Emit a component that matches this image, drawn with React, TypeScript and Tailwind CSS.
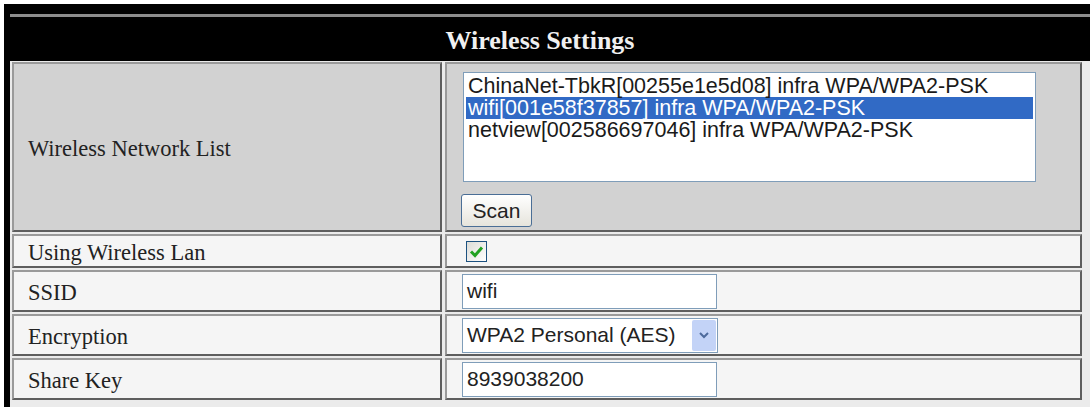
import { ReactNode } from "react";

const networks = [
  "ChinaNet-TbkR[00255e1e5d08] infra WPA/WPA2-PSK",
  "wifi[001e58f37857] infra WPA/WPA2-PSK",
  "netview[002586697046] infra WPA/WPA2-PSK",
];

const cell =
  "border-2 border-t-[#9a9a9a] border-l-[#9a9a9a] border-b-[#5e5e5e] border-r-[#5e5e5e]";

function LabelCell({ children, gray }: { children: ReactNode; gray?: boolean }) {
  return (
    <div
      className={`${cell} ${gray ? "bg-[#d2d2d2]" : "bg-[#f5f5f5]"} flex items-center pl-[14px] pt-[3px] font-['Liberation_Serif',serif] text-[22.5px] text-[#222]`}
    >
      {children}
    </div>
  );
}

function ValueCell({ children }: { children: ReactNode }) {
  return <div className={`${cell} bg-[#f5f5f5] flex items-center pl-[15px]`}>{children}</div>;
}

function TextInput({ value }: { value: string }) {
  return (
    <div className="flex h-[35px] w-[255px] items-center border border-[#7f9db9] bg-white pl-[4px] text-[21px] text-[#222]">
      {value}
    </div>
  );
}

export default function App() {
  return (
    <div className="h-[407px] w-[1090px] overflow-hidden bg-white pl-1 pt-1 font-['Liberation_Sans',Arial,sans-serif]">
      <div className="flex h-full flex-col border-l-[6px] border-black bg-[#ebebeb]">
        {/* header */}
        <div className="h-[57px] bg-black pt-[10px]">
          <div className="h-[3px] bg-[#8c8c8c]" />
          <div className="flex h-[47px] items-center justify-center pr-[20px] font-['Liberation_Serif',serif] text-[26px] font-bold text-[#f0f0f0]">
            Wireless Settings
          </div>
        </div>

        {/* rows */}
        <div className="grid grid-cols-[430px_637px] grid-rows-[170px_34px_42px_42px_42px] gap-x-[3px] gap-y-[2px] pl-[2px] pt-[1px]">
          <LabelCell gray>Wireless Network List</LabelCell>
          <div className={`${cell} bg-[#d2d2d2] flex flex-col pl-[16px] pt-[8px]`}>
            <div className="h-[110px] w-[573px] border border-[#7f9db9] bg-white p-[2px] text-[21.5px] leading-[22px] text-[#1a1a1a]">
              {networks.map((n, i) => (
                <div
                  key={n}
                  className={`pl-[2px] ${i === 1 ? "bg-[#316ac5] text-white" : ""}`}
                >
                  {n}
                </div>
              ))}
            </div>
            <div className="mt-[12px] -ml-[2px] flex h-[33px] w-[71px] items-center justify-center rounded-[3px] border border-[#4a6e96] bg-gradient-to-b from-white to-[#e6e4dc] text-[21px] text-[#222]">
              Scan
            </div>
          </div>

          <LabelCell>Using Wireless Lan</LabelCell>
          <ValueCell>
            <div className="ml-[4px] flex h-[21px] w-[21px] items-center justify-center border border-[#1c5180] bg-gradient-to-br from-[#dcdcd7] to-white">
              <svg width="15" height="13" viewBox="0 0 15 13">
                <path d="M2 6.5 L6 10.5 L13 2.5" fill="none" stroke="#21a121" strokeWidth="3" />
              </svg>
            </div>
          </ValueCell>

          <LabelCell>SSID</LabelCell>
          <ValueCell>
            <TextInput value="wifi" />
          </ValueCell>

          <LabelCell>Encryption</LabelCell>
          <ValueCell>
            <div className="flex h-[35px] w-[256px] items-center border border-[#7f9db9] bg-white p-[1px] text-[21px] text-[#222]">
              <span className="flex-1 pl-[3px]">WPA2 Personal (AES)</span>
              <span className="flex h-full w-[24px] items-center justify-center rounded-[2px] bg-[#c3d3f7]">
                <svg width="10" height="7" viewBox="0 0 10 7">
                  <path d="M1 1 L5 5 L9 1" fill="none" stroke="#4d6a9c" strokeWidth="2" />
                </svg>
              </span>
            </div>
          </ValueCell>

          <LabelCell>Share Key</LabelCell>
          <ValueCell>
            <TextInput value="8939038200" />
          </ValueCell>
        </div>
      </div>
    </div>
  );
}
